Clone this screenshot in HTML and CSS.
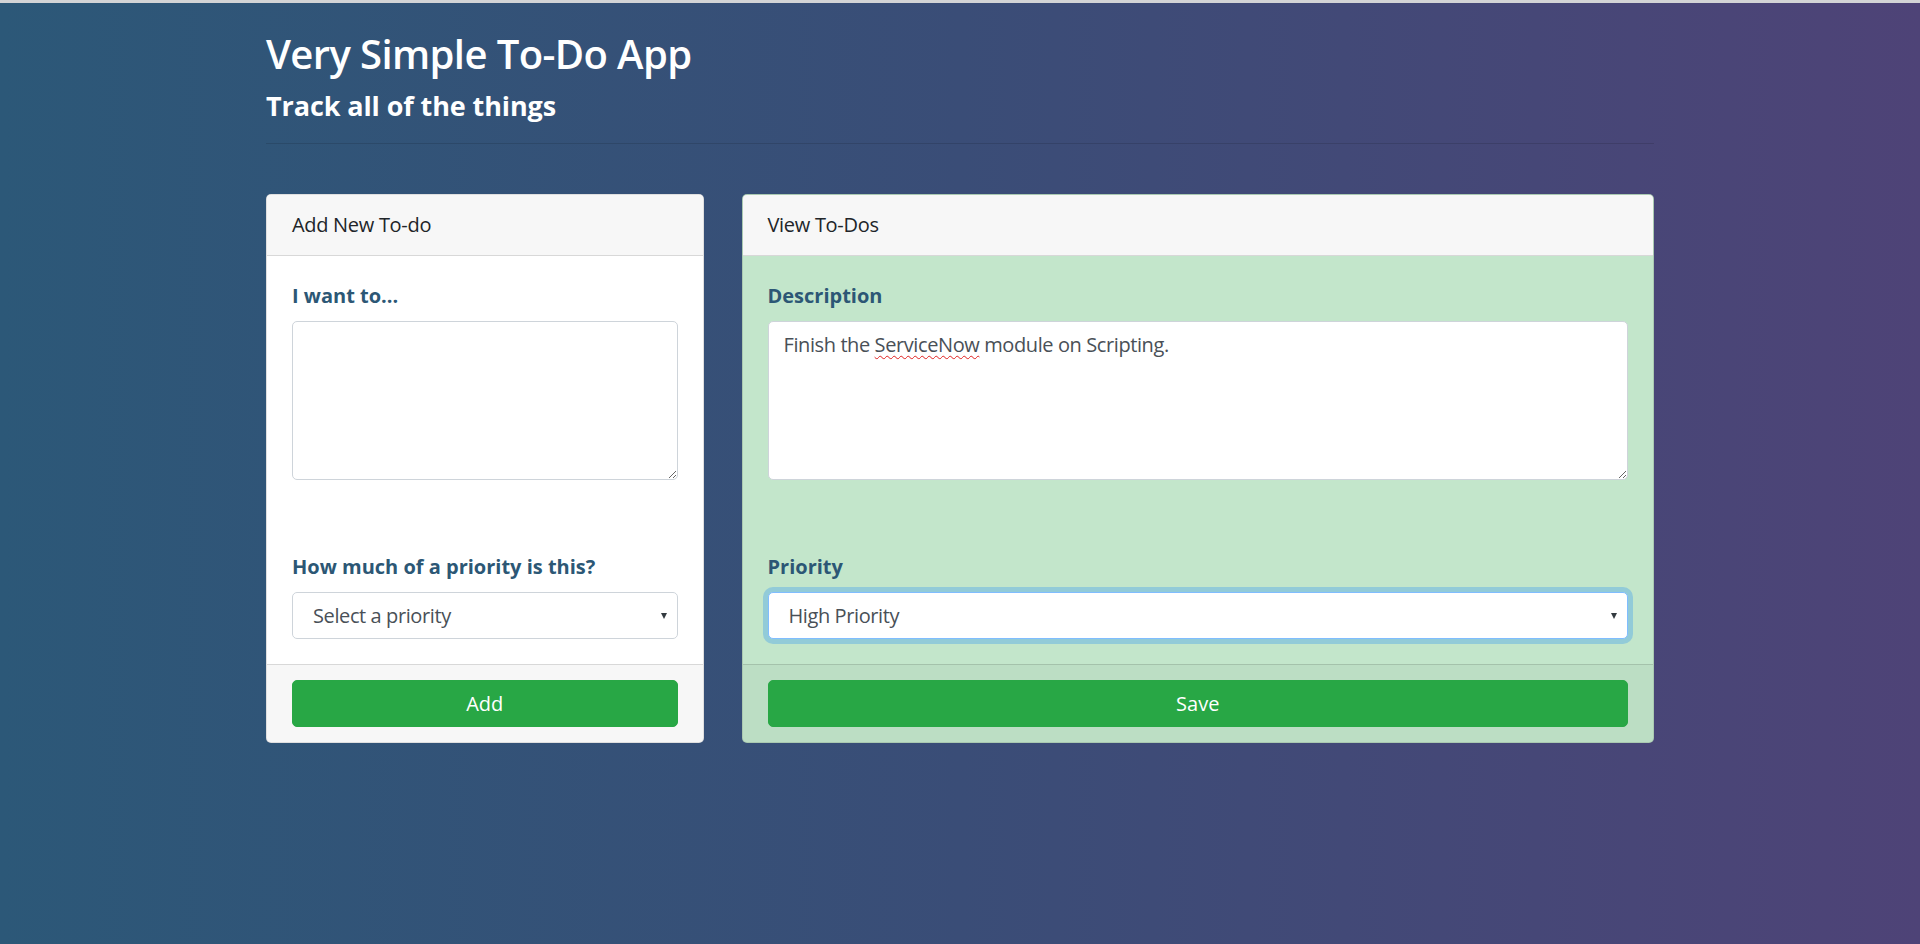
FILE: index.html
```html
<!DOCTYPE html>
<html lang="en">
<head>
<meta charset="utf-8">
<title>Very Simple To-Do App</title>
<link rel="stylesheet" href="styles.css">
</head>
<body>
<div class="container">
  <header class="page-header">
    <h1 class="title">Very Simple To-Do App</h1>
    <h2 class="subtitle">Track all of the things</h2>
  </header>
  <hr class="divider">
  <div class="row">
    <section class="card">
      <div class="card-header">Add New To-do</div>
      <div class="card-body">
        <div class="form-group form-group-text">
          <label class="label" for="new-todo">I want to...</label>
          <textarea id="new-todo" class="form-control textarea"></textarea>
        </div>
        <div class="form-group">
          <label class="label" for="new-priority">How much of a priority is this?</label>
          <div class="select-wrap">
            <select id="new-priority" class="form-control select">
              <option>Select a priority</option>
              <option>High Priority</option>
              <option>Medium Priority</option>
              <option>Low Priority</option>
            </select>
          </div>
        </div>
      </div>
      <div class="card-footer">
        <button class="btn btn-success" type="button">Add</button>
      </div>
    </section>
    <section class="card card-success">
      <div class="card-header">View To-Dos</div>
      <div class="card-body">
        <div class="form-group form-group-text">
          <label class="label">Description</label>
          <div class="form-control textarea textbox">Finish the <span class="misspelled">ServiceNow</span> module on Scripting.</div>
        </div>
        <div class="form-group">
          <label class="label" for="view-priority">Priority</label>
          <div class="select-wrap">
            <select id="view-priority" class="form-control select focused">
              <option>High Priority</option>
              <option>Medium Priority</option>
              <option>Low Priority</option>
            </select>
          </div>
        </div>
      </div>
      <div class="card-footer">
        <button class="btn btn-success" type="button">Save</button>
      </div>
    </section>
  </div>
</div>
</body>
</html>
```
FILE: styles.css
```css
* {
  box-sizing: border-box;
}

html, body {
  margin: 0;
  padding: 0;
}

body {
  min-height: 944px;
  border-top: 3px solid #d3d4d6;
  background: linear-gradient(90deg, #2c5878 0%, #3a4d77 50%, #4e4377 100%);
  font-family: "Open Sans", "Noto Sans", sans-serif;
  font-size: 20px;
  line-height: 30px;
  color: #212529;
}

.container {
  width: 1388px;
  margin: 0 auto;
  padding-top: 27px;
}

.page-header {
  display: flex;
  flex-direction: column;
  gap: 12px;
}

.title {
  margin: 0;
  font-size: 40px;
  line-height: 48px;
  font-weight: 600;
  letter-spacing: -0.6px;
  color: #ffffff;
}

.subtitle {
  margin: 0;
  font-size: 27px;
  line-height: 32px;
  font-weight: 700;
  letter-spacing: -0.1px;
  color: #ffffff;
}

.divider {
  margin: 21px 0 50px;
  border: 0;
  border-top: 1px solid rgba(0, 0, 0, 0.12);
  height: 0;
}

.row {
  display: grid;
  grid-template-columns: 437.5px 912.5px;
  gap: 38px;
  align-items: start;
}

.card {
  display: flex;
  flex-direction: column;
  background: #ffffff;
  border: 1px solid rgba(0, 0, 0, 0.125);
  border-radius: 5px;
  overflow: hidden;
}

.card-success {
  background: #c3e6cb;
}

.card-header {
  padding: 15px 25px;
  background: #f7f7f7;
  border-bottom: 1px solid rgba(0, 0, 0, 0.125);
  color: #212529;
  letter-spacing: -0.3px;
}

.card-body {
  padding: 25px;
}

.form-group {
  display: flex;
  flex-direction: column;
}

.form-group-text {
  margin-bottom: 72px;
}

.label {
  font-weight: 700;
  color: #2c5775;
  margin-bottom: 10px;
}

.form-control {
  display: block;
  width: 100%;
  font-family: inherit;
  font-size: 20px;
  line-height: 30px;
  letter-spacing: -0.4px;
  color: #495057;
  background: #ffffff;
  border: 1px solid #ced4da;
  border-radius: 5px;
  padding: 7.5px 15px;
  margin: 0;
}

.textarea {
  height: 159px;
  resize: both;
  overflow: auto;
}

.misspelled {
  text-decoration: underline wavy #e0201f;
  text-decoration-thickness: 1px;
  text-underline-offset: 3px;
}

.select-wrap {
  position: relative;
}

.select-wrap::after {
  content: "";
  position: absolute;
  right: 11px;
  top: 21px;
  border-left: 3.5px solid transparent;
  border-right: 3.5px solid transparent;
  border-top: 6px solid #333a40;
  pointer-events: none;
}

.select {
  height: 47px;
  padding-left: 20px;
  appearance: none;
  -webkit-appearance: none;
  outline: none;
}

.focused {
  border-color: #80bdff;
  box-shadow: 0 0 0 5px rgba(0, 123, 255, 0.25);
}

.card-footer {
  padding: 15px 25px;
  background: rgba(0, 0, 0, 0.03);
  border-top: 1px solid rgba(0, 0, 0, 0.125);
}

.btn {
  display: block;
  width: 100%;
  height: 47px;
  padding: 7.5px 15px;
  font-family: inherit;
  font-size: 20px;
  line-height: 30px;
  border: 1px solid transparent;
  border-radius: 5px;
  cursor: pointer;
}

.btn-success {
  background: #28a745;
  border-color: #28a745;
  color: #ffffff;
}
```
